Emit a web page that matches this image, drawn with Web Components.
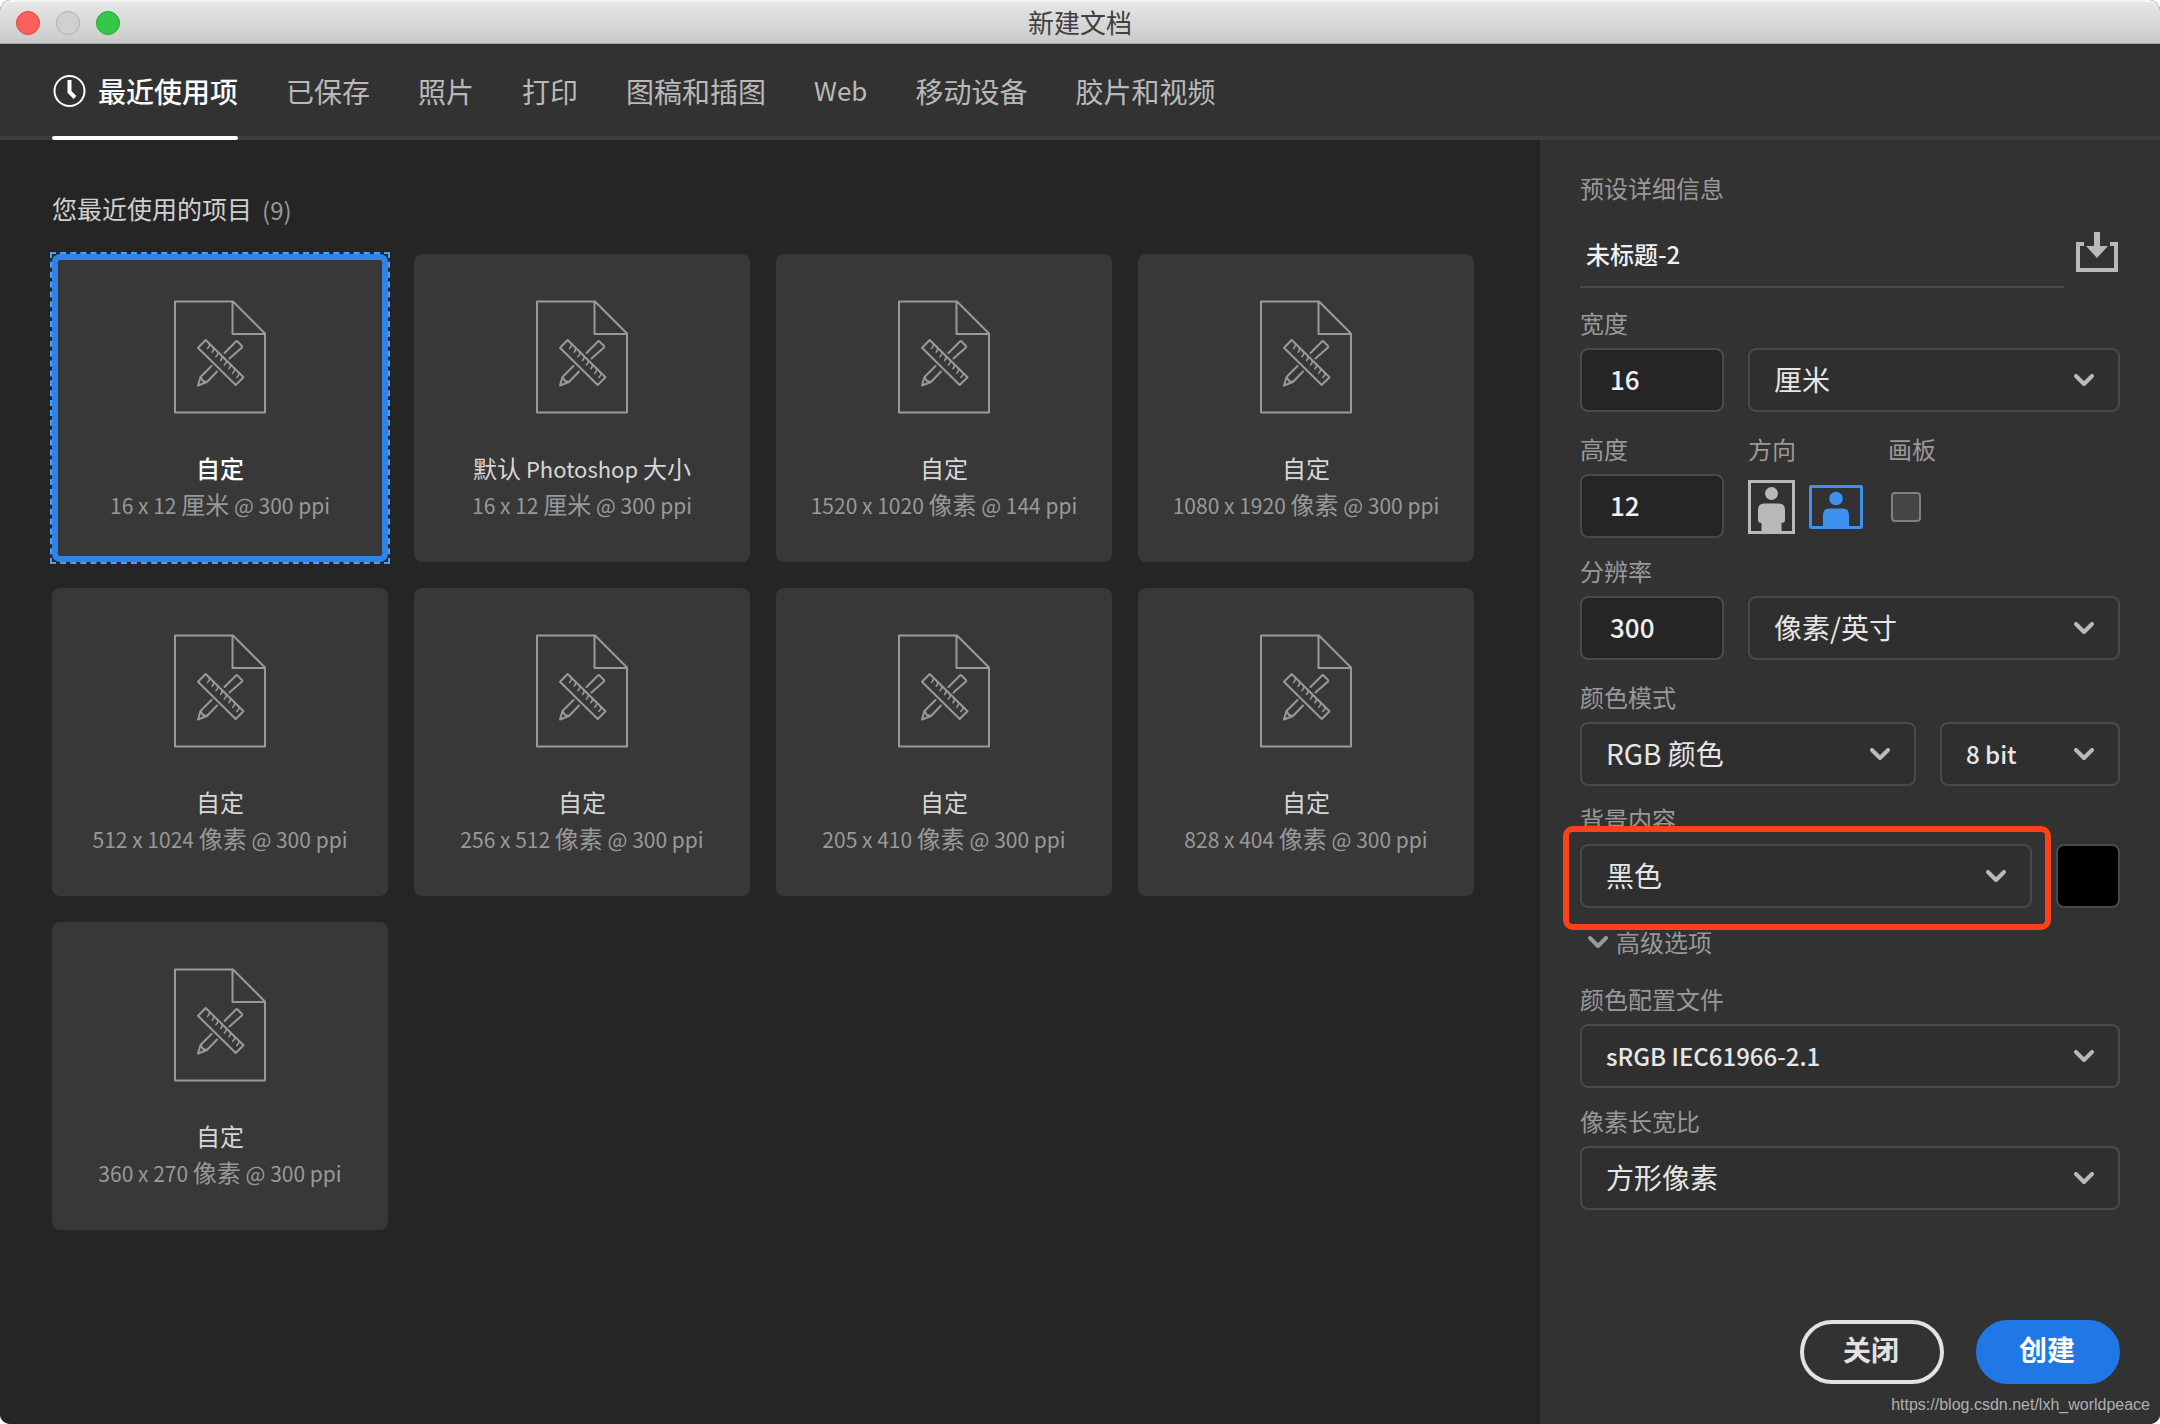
<!DOCTYPE html>
<html lang="zh-CN">
<head>
<meta charset="utf-8">
<title>新建文档</title>
<style>
  body { margin: 0; background: #fff; font-family: "Noto Sans CJK SC", "Noto Sans", sans-serif; }
</style>
</head>
<body>
<new-document-window></new-document-window>

<script>
const define = (name, html, setup) => {
  const template = document.createElement('template');
  template.innerHTML = `<style>
    *, *::before, *::after { box-sizing: border-box; }
    button, input, select { font: inherit; color: inherit; margin: 0; border-radius: 0; }
    button { background: none; border: 0; padding: 0; cursor: pointer; }
    svg { display: block; flex: none; }
  </style>` + html;
  customElements.define(name, class extends HTMLElement {
    constructor() {
      super();
      this.attachShadow({ mode: 'open' }).append(template.content.cloneNode(true));
    }
    connectedCallback() { if (setup) setup(this.shadowRoot, this); }
  });
};

// Fills an element, wrapping Latin runs so that they can be sized apart from the Chinese text
const setMixedText = (el, text) => {
  for (const run of text.match(/[\x20-\x7e]+|[^\x20-\x7e]+/g)) {
    if (/[\x21-\x7e]/.test(run)) {
      const latin = document.createElement('span');
      latin.className = 'latin';
      latin.textContent = run;
      el.append(latin);
    } else el.append(run);
  }
};

// macOS title bar with the three window buttons
define('title-bar', `
  <style>
    :host { display: grid; grid-template-columns: 1fr auto 1fr; align-items: center; height: 44px; padding: 0 16px;
      background: linear-gradient(#e6e6e6, #cacaca); border-top: 2px solid #f4f4f4; border-bottom: 1px solid #a3a5a5; box-sizing: border-box; }
    .lights { display: flex; gap: 16px; }
    .lights button { width: 24px; height: 24px; border-radius: 50%; border: 1px solid #e2463f; background: #fc605c; }
    .lights .min { background: #d0d0d0; border-color: #b0b0b0; }
    .lights .max { background: #34c84a; border-color: #23a833; }
    h1 { margin: 0; padding-bottom: 2px; font-size: 26px; line-height: 36px; font-weight: 400; color: #404040; }
  </style>
  <div class="lights">
    <button aria-label="关闭窗口"></button><button class="min" aria-label="最小化" disabled></button><button class="max" aria-label="缩放"></button>
  </div>
  <h1><slot></slot></h1>`);

define('category-tab', `
  <style>
    :host { display: flex; }
    button { display: flex; align-items: center; gap: 12px; height: 92px; padding-top: 2px; font-size: 28px; line-height: 40px; color: #b9b9b9; white-space: nowrap; position: relative; }
    svg { display: none; }
    :host([latin]) button { font-size: 26px; padding-top: 0; }
    :host([active]) button { color: #fff; font-weight: 500; }
    :host([active]) svg { display: block; }
    :host([active]) button::after { content: ""; position: absolute; left: 0; right: 0; bottom: -4px; height: 4px; border-radius: 2px; background: #fff; }
  </style>
  <button type="button">
    <svg width="34" height="34" viewBox="0 0 34 34" fill="none" stroke="#fff"><circle cx="17.500" cy="17" r="15" stroke-width="2"/><path d="M17.500 6v12l5.500 5.500" stroke-width="4"/></svg>
    <span><slot></slot></span>
  </button>`);

define('category-tabs', `
  <style>
    :host { display: block; background: #323232; border-bottom: 4px solid #3d3d3d; }
    nav { display: flex; gap: 48px; padding: 0 52px; }
  </style>
  <nav><slot></slot></nav>`);

define('preset-card', `
  <style>
    :host { display: block; }
    button { display: flex; flex-direction: column; align-items: center; width: 100%; height: 308px; padding: 46px 8px 0;
      border-radius: 8px; background: #383838; position: relative; }
    svg { margin-bottom: 36px; }
    .name, .detail { height: 36px; font-size: 24px; line-height: 36px; white-space: pre; }
    .name { color: #d6d6d6; }
    .name .latin { font-size: 22px; }
    .detail { color: #999; }
    .detail .latin { font-size: 21px; }
    :host([selected]) button { box-shadow: inset 0 0 0 6px #2d83e8; }
    :host([selected]) button::after { content: ""; position: absolute; inset: -2px; border: 2px dashed #4ba0f8; }
    :host([selected]) .name { color: #fff; font-weight: 500; }
  </style>
  <button type="button">
    <svg width="92" height="114" viewBox="0 0 92 114" fill="none" stroke="#999" stroke-width="2" stroke-linejoin="round" stroke-linecap="round">
      <path d="M1 1.500H59L91 33.500V112.500H1ZM58.500 1.500V34H91"/>
      <path d="M31.700 40 24 47.700 61.700 85 69.500 77.300Z"/>
      <path stroke-width="1.600" d="M35 43.500q1.500 2-1.500 5M39.200 47.600q1.500 2-1 4.500M43.400 51.700q1.500 2-1.500 5M47.600 55.900q1.500 2-1 4.500M51.800 60q1.500 2-1.500 5M56 64.100q1.500 2-1 4.500M60.200 68.300q1.500 2-1.500 5M64.400 72.400q1.500 2-1.500 5"/>
      <path d="M50.500 53 62 41.500Q62.700 40.800 63.500 41.500L68 46Q68.500 46.700 68 47.400L55.500 58.500M37.500 66 26.500 77 24 85.500 33 82 43 71.500M26.500 77 29 81 33 82"/>
    </svg>
    <span class="name"></span>
    <span class="detail"></span>
  </button>`, (root, host) => {
  setMixedText(root.querySelector('.name'), host.getAttribute('name'));
  setMixedText(root.querySelector('.detail'), host.getAttribute('detail'));
});

define('recent-presets', `
  <style>
    :host { display: block; padding: 50px 52px 0; background: #252525; }
    h2 { display: flex; align-items: center; gap: 10px; margin: 0 0 28px; height: 36px; font-size: 25px; line-height: 36px; font-weight: 400; color: #d0d0d0; }
    h2 small { font-size: 24px; padding-top: 4px; color: #999; }
    .grid { display: grid; grid-template-columns: repeat(auto-fill, 336px); gap: 26px; }
  </style>
  <h2>您最近使用的项目 <small>(9)</small></h2>
  <div class="grid">
    <preset-card selected name="自定" detail="16 x 12 厘米 @ 300 ppi"></preset-card>
    <preset-card name="默认 Photoshop 大小" detail="16 x 12 厘米 @ 300 ppi"></preset-card>
    <preset-card name="自定" detail="1520 x 1020 像素 @ 144 ppi"></preset-card>
    <preset-card name="自定" detail="1080 x 1920 像素 @ 300 ppi"></preset-card>
    <preset-card name="自定" detail="512 x 1024 像素 @ 300 ppi"></preset-card>
    <preset-card name="自定" detail="256 x 512 像素 @ 300 ppi"></preset-card>
    <preset-card name="自定" detail="205 x 410 像素 @ 300 ppi"></preset-card>
    <preset-card name="自定" detail="828 x 404 像素 @ 300 ppi"></preset-card>
    <preset-card name="自定" detail="360 x 270 像素 @ 300 ppi"></preset-card>
  </div>`);

const fieldLabel = `label, .label { display: block; margin-bottom: 8px; font-size: 24px; line-height: 34px; color: #999; white-space: nowrap; }`;

define('number-field', `
  <style>
    :host { display: block; width: 144px; }
    ${fieldLabel}
    input { display: block; width: 100%; height: 64px; padding: 0 28px 4px; border: 2px solid #4a4a4a; border-radius: 8px; background: #252525;
      font-size: 26px; font-weight: 500; color: #f0f0f0; outline: 0; }
  </style>
  <label for="f"></label><input id="f" type="text" inputmode="numeric">`, (root, host) => {
  root.querySelector('label').textContent = host.getAttribute('label');
  root.querySelector('input').value = host.getAttribute('value');
});

define('select-field', `
  <style>
    :host { display: block; flex: 1; min-width: 0; }
    ${fieldLabel}
    .box { display: grid; align-items: center; }
    select, svg { grid-area: 1 / 1; }
    select { appearance: none; width: 100%; height: 64px; padding: 0 64px 2px 24px; border: 2px solid #4a4a4a; border-radius: 8px; background: #2f2f2f;
      font-size: 28px; color: #e6e6e6; outline: 0; }
    :host([latin]) select { font-size: 24px; font-weight: 500; }
    svg { justify-self: end; margin-right: 26px; pointer-events: none; }
  </style>
  <label for="f"></label>
  <div class="box"><select id="f"><option></option></select>
    <svg width="20" height="12" viewBox="0 0 20 12" fill="none" stroke="#b9b9b9" stroke-width="4" stroke-linecap="round" stroke-linejoin="round"><path d="M2 2l8 8 8-8"/></svg>
  </div>`, (root, host) => {
  const label = root.querySelector('label');
  if (host.hasAttribute('label')) label.textContent = host.getAttribute('label');
  else { label.remove(); root.querySelector('select').setAttribute('aria-label', host.getAttribute('hint')); }
  root.querySelector('option').textContent = host.getAttribute('value');
});

define('orientation-picker', `
  <style>
    :host { display: block; width: 116px; }
    ${fieldLabel}
    .row { display: flex; align-items: center; gap: 14px; height: 64px; padding-top: 2px; }
  </style>
  <div class="label">方向</div>
  <div class="row">
    <button type="button" aria-label="纵向"><svg width="47" height="54" viewBox="0 0 47 54" fill="#b9b9b9"><rect x="1.500" y="1.500" width="44" height="51" fill="none" stroke="#b9b9b9" stroke-width="3"/><circle cx="23.500" cy="13.500" r="6.500"/><path d="M16 23.500H31Q37 23.500 37 30V40Q37 43 33.500 43V52H13.500V43Q10 43 10 40V30Q10 23.500 16 23.500Z"/></svg></button>
    <button type="button" aria-label="横向"><svg width="54" height="44" viewBox="0 0 54 44" fill="#3d91f0"><rect x="1.500" y="1.500" width="51" height="41" rx="1" fill="none" stroke="#3d91f0" stroke-width="3"/><circle cx="27" cy="13.500" r="6.800"/><path d="M20 23.500H34Q40 23.500 40 30V42H14V30Q14 23.500 20 23.500Z"/></svg></button>
  </div>`);

define('artboard-toggle', `
  <style>
    :host { display: block; }
    ${fieldLabel}
    .row { display: flex; align-items: center; height: 64px; padding: 2px 0 0 3px; }
    input { appearance: none; width: 30px; height: 30px; border: 2px solid #808080; border-radius: 4px; background: #454545; }
  </style>
  <label for="f">画板</label><div class="row"><input id="f" type="checkbox"></div>`);

define('pill-button', `
  <style>
    :host { display: block; }
    button { width: 144px; height: 64px; border: 4px solid #e3e3e3; border-radius: 32px; font-size: 28px; line-height: 40px; font-weight: 700; color: #e3e3e3; padding: 0 2px 6px 0; }
    :host([primary]) button { background: #1f78e6; border-color: #1f78e6; color: #fff; }
  </style>
  <button type="button"><slot></slot></button>`);

define('preset-details', `
  <style>
    :host { display: flex; flex-direction: column; padding: 30px 40px 40px; background: #323232; }
    h2 { margin: 0 0 18px; font-size: 24px; line-height: 36px; font-weight: 400; color: #999; }
    .name { display: flex; align-items: flex-start; gap: 12px; padding-right: 2px; margin-bottom: 18px; }
    .name input { flex: 1; min-width: 0; height: 64px; padding: 0 6px 4px; border: 0; border-bottom: 2px solid #4a4a4a; background: none; font-size: 24px; font-weight: 500; color: #f0f0f0; outline: 0; }
    .name button { padding-top: 8px; }
    .row { display: flex; align-items: flex-end; gap: 24px; }
    .wide { margin-bottom: 20px; }
    .near { margin-bottom: 16px; }
    .bits { flex: 0 0 180px; }
    .marked { position: relative; flex: 1; }
    .marked::after { content: ""; position: absolute; left: -17px; right: -19px; bottom: -22px; height: 104px; box-sizing: border-box; border: 6px solid #ff411b; border-radius: 10px; pointer-events: none; }
    .swatch { width: 64px; height: 64px; border: 2px solid #4a4a4a; border-radius: 8px; background: #000; }
    .advanced { display: flex; align-items: center; gap: 8px; align-self: flex-start; padding-left: 8px; margin-bottom: 22px; font-size: 24px; line-height: 36px; color: #999; }
    footer { display: flex; justify-content: flex-end; gap: 32px; margin-top: auto; }
  </style>
  <h2>预设详细信息</h2>
  <div class="name">
    <input type="text" aria-label="名称" value="未标题-2">
    <button type="button" aria-label="存储预设"><svg width="42" height="40" viewBox="0 0 42 40" fill="#b9b9b9"><path d="M18 0h6v14h8L21 26 10 14h8ZM0 10H8V14H4V36H38V14H34V10H42V40H0Z"/></svg></button>
  </div>
  <div class="row wide"><number-field label="宽度" value="16"></number-field><select-field hint="单位" value="厘米"></select-field></div>
  <div class="row near"><number-field label="高度" value="12"></number-field><orientation-picker></orientation-picker><artboard-toggle></artboard-toggle></div>
  <div class="row wide"><number-field label="分辨率" value="300"></number-field><select-field hint="分辨率单位" value="像素/英寸"></select-field></div>
  <div class="row near"><select-field label="颜色模式" value="RGB 颜色"></select-field><select-field class="bits" latin hint="位深度" value="8 bit"></select-field></div>
  <div class="row near"><select-field class="marked" label="背景内容" value="黑色"></select-field><button class="swatch" type="button" aria-label="背景颜色"></button></div>
  <button class="advanced" type="button"><svg width="20" height="12" viewBox="0 0 20 12" fill="none" stroke="#999" stroke-width="4" stroke-linecap="round" stroke-linejoin="round"><path d="M2 2l8 8 8-8"/></svg>高级选项</button>
  <div class="row near"><select-field latin label="颜色配置文件" value="sRGB IEC61966-2.1"></select-field></div>
  <div class="row near"><select-field label="像素长宽比" value="方形像素"></select-field></div>
  <footer><pill-button>关闭</pill-button><pill-button primary>创建</pill-button></footer>`);

define('new-document-window', `
  <style>
    :host { display: flex; flex-direction: column; min-height: 100vh; border-radius: 10px; overflow: hidden; position: relative; background: #252525; }
    main { flex: 1; display: grid; grid-template-columns: minmax(0, 1fr) 620px; }
    .credit { position: absolute; right: 10px; bottom: 8px; font: 16px/22px "Liberation Sans", sans-serif; color: #b0b0b0; }
  </style>
  <title-bar>新建文档</title-bar>
  <category-tabs>
    <category-tab active>最近使用项</category-tab><category-tab>已保存</category-tab><category-tab>照片</category-tab><category-tab>打印</category-tab><category-tab>图稿和插图</category-tab><category-tab latin>Web</category-tab><category-tab>移动设备</category-tab><category-tab>胶片和视频</category-tab>
  </category-tabs>
  <main><recent-presets></recent-presets><preset-details></preset-details></main>
  <div class="credit">https://blog.csdn.net/lxh_worldpeace</div>`);
</script>
</body>
</html>
